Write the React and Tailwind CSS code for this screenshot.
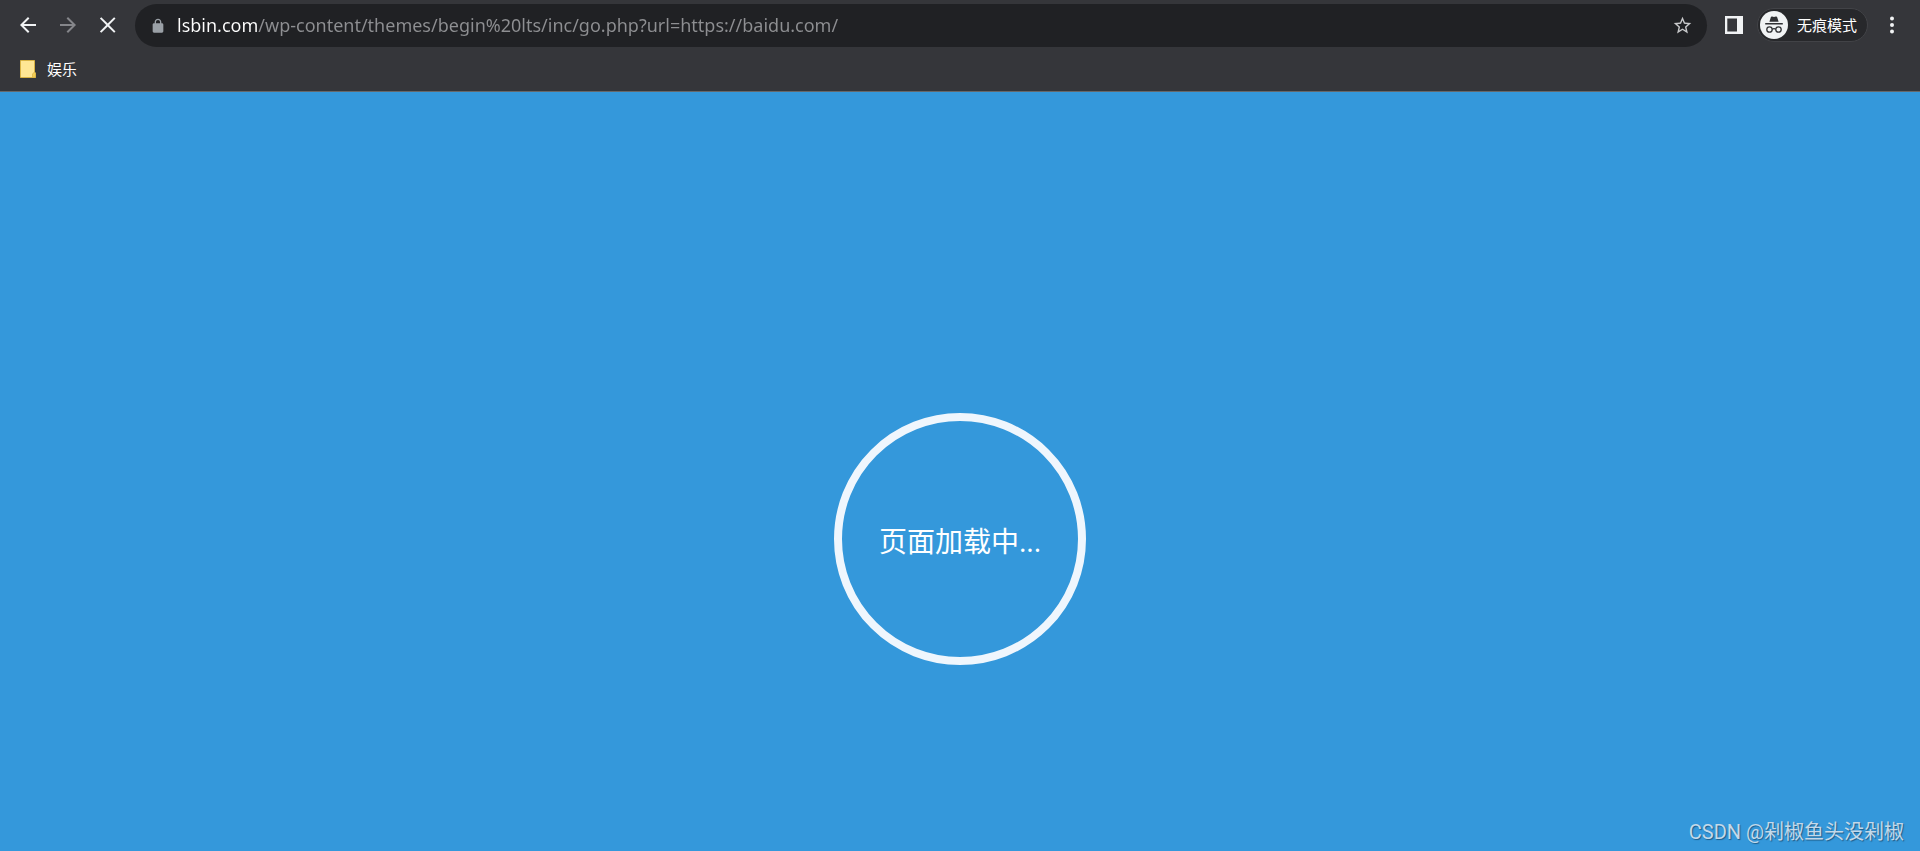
const ui = "font-['Open_Sans','Noto_Sans_CJK_SC',sans-serif]";

function NavButton({ label, path, className, disabled }) {
  return (
    <button type="button" aria-label={label} disabled={disabled} className={`flex h-[41px] w-10 items-center justify-center ${className}`}>
      <svg viewBox="0 0 24 24" className="size-6" fill="currentColor" aria-hidden="true">
        <path d={path} />
      </svg>
    </button>
  );
}

function Toolbar() {
  return (
    <div className="flex items-start pt-1 pr-4 pl-2">
      <NavButton label="后退" className="text-[#f1f3f4]" path="M20 11H7.83l5.59-5.59L12 4l-8 8 8 8 1.41-1.41L7.83 13H20v-2z" />
      <NavButton label="前进" disabled className="text-[#85868a]" path="M4 11h12.17l-5.59-5.59L12 4l8 8-8 8-1.41-1.41L16.17 13H4v-2z" />
      <NavButton label="停止加载" className="text-[#f1f3f4]" path="M19.5 5.6 18.1 4.200 11.700 10.600 5.300 4.200 3.900 5.600 10.300 12l-6.400 6.400 1.400 1.400 6.400-6.400 6.400 6.400 1.400-1.400-6.400-6.400z" />
      <form className="ml-[7px] flex h-[43px] flex-1 items-center rounded-full bg-[#202124] pl-[15px] pr-3" onSubmit={(e) => e.preventDefault()}>
        <svg viewBox="0 0 24 24" className="size-4 shrink-0" fill="#9aa0a6" aria-hidden="true">
          <path d="M18 8h-1V6c0-2.76-2.24-5-5-5S7 3.240 7 6v2H6c-1.100 0-2 .9-2 2v10c0 1.100.9 2 2 2h12c1.100 0 2-.9 2-2V10c0-1.100-.9-2-2-2zM15 8H9V6c0-1.660 1.340-3 3-3s3 1.340 3 3v2z" />
        </svg>
        <input
          type="text"
          aria-label="地址栏"
          spellCheck={false}
          defaultValue="lsbin.com/wp-content/themes/begin%20lts/inc/go.php?url=https://baidu.com/"
          className="ml-[11px] h-8 min-w-0 flex-1 bg-[linear-gradient(to_right,#ffffff_80px,#8e8f92_80px)] bg-clip-text pb-[2px] font-['Noto_Sans',sans-serif] text-[18px] text-transparent outline-none"
        />
        <button type="button" aria-label="添加书签" className="flex size-6 items-center justify-center">
          <svg viewBox="0 0 24 24" className="size-[21px]" fill="#c8c9cb" aria-hidden="true">
            <path d="M22 9.240l-7.190-.62L12 2 9.190 8.630 2 9.240l5.460 4.730L5.820 21 12 17.270 18.180 21l-1.630-7.030L22 9.240zM12 15.400l-3.760 2.270 1-4.280-3.320-2.880 4.380-.38L12 6.100l1.710 4.040 4.380.38-3.320 2.880 1 4.280L12 15.400z" />
          </svg>
        </button>
      </form>
      <button type="button" aria-label="侧边栏" className="ml-[18px] flex h-[41px] items-center">
        <svg viewBox="0 0 18 18" className="size-[18px]" aria-hidden="true">
          <path fill="#f1f3f4" fillRule="evenodd" d="M0 0h18v18H0zM2.300 2.500v13h9.700v-13z" />
        </svg>
      </button>
      <button type="button" className="mt-1 ml-[14px] flex h-[34px] items-center gap-[9px] rounded-full border border-[#424347] bg-[#27282b] pr-[10px] pl-[2px] text-[15px] text-white">
        <svg viewBox="0 0 28 28" className="size-7" aria-hidden="true">
          <circle cx="14" cy="14" r="14" fill="#f1f3f4" />
          <path fill="#303134" d="M9.400 10.800l1.500-4.700c.2-.6.7-.8 1.200-.6l1.900.6 1.900-.6c.5-.2 1 0 1.200.6l1.500 4.700zM5.200 11.900h17.600v1.500H5.200z" />
          <g fill="none" stroke="#303134" strokeWidth="1.300">
            <circle cx="9.500" cy="18.500" r="2.700" />
            <circle cx="18.500" cy="18.500" r="2.700" />
            <path d="M12.200 18.200q1.800-1.200 3.600 0" />
          </g>
        </svg>
        无痕模式
      </button>
      <button type="button" aria-label="菜单" className="ml-3 flex h-[41px] w-6 items-center justify-center">
        <svg viewBox="0 0 4 18" className="h-[18px] w-1" fill="#f1f3f4" aria-hidden="true">
          <circle cx="2" cy="2.500" r="2" />
          <circle cx="2" cy="9" r="2" />
          <circle cx="2" cy="15.500" r="2" />
        </svg>
      </button>
    </div>
  );
}

function BookmarksBar() {
  return (
    <nav aria-label="书签栏" className="flex h-[45px] items-center border-b border-[#66686b] pl-5">
      <button type="button" className="flex items-center gap-[11px] text-[15px] leading-6 text-white">
        <svg viewBox="0 0 16 18" className="h-[18px] w-4" aria-hidden="true">
          <path fill="#ffe694" stroke="#d9b343" d="M.5.5h14v11.500l.9 1v4.500H.5z" />
          <path fill="#f6d057" stroke="#d9b343" strokeWidth=".8" d="M12.600 17.400v-3.600l1.800-1.600 1 1v4.200z" />
        </svg>
        娱乐
      </button>
    </nav>
  );
}

export default function App() {
  return (
    <div className={`flex min-h-screen flex-col bg-[#3498db] ${ui}`}>
      <header className="bg-[#35363a]">
        <Toolbar />
        <BookmarksBar />
      </header>
      <main className="relative flex flex-1 items-center justify-center pt-[135px]">
        <div role="status" className="flex size-[252px] items-center justify-center rounded-full border-8 border-[#eff6fd] pt-1 text-[28px] leading-10 text-white">
          页面加载中...
        </div>
        <p className="absolute right-4 bottom-1 font-['Roboto','Noto_Sans_CJK_SC',sans-serif] text-[20px] leading-[30px] text-[#c3d9ea] [text-shadow:1px_1px_1px_#1f5d88]">
          CSDN @剁椒鱼头没剁椒
        </p>
      </main>
    </div>
  );
}
